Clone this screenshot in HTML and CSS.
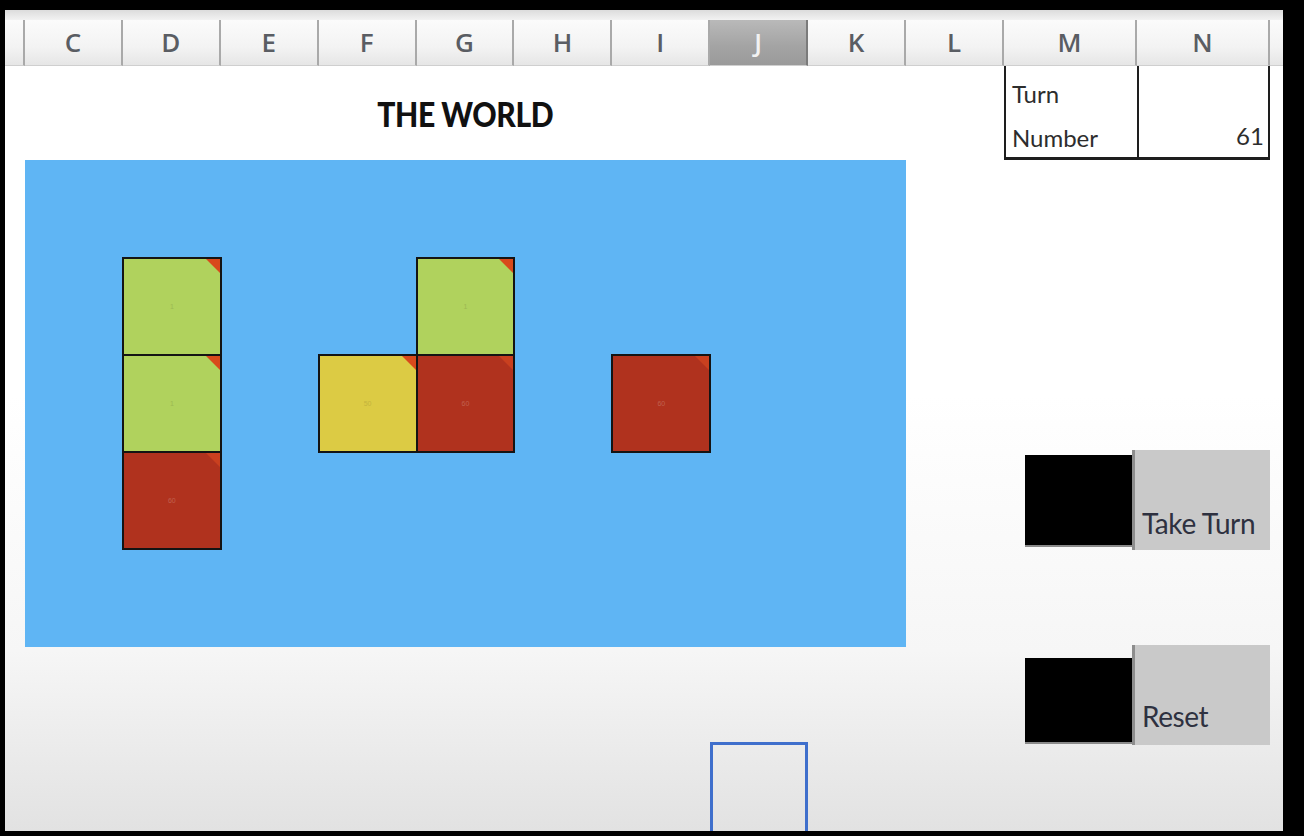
FILE: index.html
```html
<!DOCTYPE html>
<html lang="en">
<head>
<meta charset="utf-8">
<title>The World</title>
<link rel="stylesheet" href="styles.css">
</head>
<body>
<div class="screen">
  <div class="sheet">
    <div class="top-strip"></div>
    <div class="col-head">&nbsp;</div>
    <div class="col-head">C</div>
    <div class="col-head">D</div>
    <div class="col-head">E</div>
    <div class="col-head">F</div>
    <div class="col-head">G</div>
    <div class="col-head">H</div>
    <div class="col-head">I</div>
    <div class="col-head col-head--active">J</div>
    <div class="col-head">K</div>
    <div class="col-head">L</div>
    <div class="col-head">M</div>
    <div class="col-head">N</div>
    <div class="col-head col-head--rest">&nbsp;</div>

    <div class="title-cell"><h1 class="title">THE WORLD</h1></div>

    <div class="turn-box">
      <div class="turn-label">Turn<br>Number</div>
      <div class="turn-value">61</div>
    </div>

    <div class="world">
      <div class="tile tile--green c2 r2"><span>1</span></div>
      <div class="tile tile--green c2 r3"><span>1</span></div>
      <div class="tile tile--red c2 r4"><span>60</span></div>
      <div class="tile tile--yellow c4 r3"><span>50</span></div>
      <div class="tile tile--green c5 r2"><span>1</span></div>
      <div class="tile tile--red c5 r3"><span>60</span></div>
      <div class="tile tile--red c7 r3"><span>60</span></div>
    </div>

    <div class="controls">
      <div class="btn">
        <div class="btn-black"></div>
        <div class="btn-face">Take Turn</div>
      </div>
      <div class="btn btn--reset">
        <div class="btn-black"></div>
        <div class="btn-face">Reset</div>
      </div>
    </div>

    <div class="selected-cell"></div>
  </div>
</div>
</body>
</html>
```
FILE: styles.css
```css
html, body {
  margin: 0;
  padding: 0;
  background: #000;
}

.screen {
  width: 1304px;
  height: 836px;
  box-sizing: border-box;
  padding: 10px 21px 5px 5px;
  display: flex;
  background: #000;
}

.sheet {
  flex: 1;
  display: grid;
  grid-template-columns: 20px repeat(10, 97.9px) 133px 133px 1fr;
  grid-template-rows: 10px 46px 94px 98px 97px 97px 97px 98px 97px 1fr;
  background: linear-gradient(to bottom, #ffffff 0%, #ffffff 47%, #f6f6f6 78%, #e2e2e2 100%);
  overflow: hidden;
  font-family: Lato, "Open Sans", "Liberation Sans", sans-serif;
}

.top-strip {
  grid-column: 1 / -1;
  grid-row: 1;
  background: linear-gradient(to bottom, #dcdcdc, #f2f2f2);
}

.col-head {
  grid-row: 2;
  display: flex;
  align-items: center;
  justify-content: center;
  background: linear-gradient(to bottom, #fbfbfb 0%, #f3f3f3 60%, #e6e6e6 100%);
  border-right: 2px solid #a9a9a9;
  border-bottom: 1px solid #cfcfcf;
  box-sizing: border-box;
  font-family: "Open Sans", Lato, sans-serif;
  font-weight: 600;
  font-size: 26px;
  color: #5a5d63;
  padding-bottom: 2px;
}

.col-head--active {
  background: linear-gradient(to bottom, #b9b9b9 0%, #a3a3a3 60%, #9a9a9a 100%);
  color: #f2f2f2;
  border-right-color: #7b7b7b;
}

.col-head--rest {
  border-right: none;
}

.title-cell {
  grid-column: 2 / 11;
  grid-row: 3;
  display: flex;
  align-items: center;
  justify-content: center;
}

.title {
  margin: 0;
  font-family: Lato, sans-serif;
  font-weight: 900;
  font-size: 35px;
  color: #111;
  letter-spacing: -0.5px;
  transform: scaleX(0.86);
}

.turn-box {
  grid-column: 12 / 14;
  grid-row: 3;
  display: grid;
  grid-template-columns: 133px 1fr;
  border-left: 2px solid #1e1e1e;
  border-right: 2px solid #1e1e1e;
  border-bottom: 3px solid #1e1e1e;
  box-sizing: border-box;
  font-size: 24px;
  color: #2d2d2d;
}

.turn-label {
  line-height: 44px;
  padding: 6px 0 0 6px;
  border-right: 2px solid #1e1e1e;
}

.turn-value {
  display: flex;
  align-items: flex-end;
  justify-content: flex-end;
  padding: 0 4px 4px 0;
  line-height: 40px;
}

.world {
  grid-column: 2 / 11;
  grid-row: 4 / 9;
  background: #5fb5f4;
  display: grid;
  grid-template-columns: repeat(9, 1fr);
  grid-template-rows: 98px 97px 97px 97px 98px;
}

.c2 { grid-column: 2; }
.c4 { grid-column: 4; }
.c5 { grid-column: 5; }
.c7 { grid-column: 7; }
.r2 { grid-row: 2; }
.r3 { grid-row: 3; }
.r4 { grid-row: 4; }

.tile {
  position: relative;
  border: 2px solid #141414;
  box-sizing: border-box;
  margin: -1px;
  display: flex;
  align-items: center;
  justify-content: center;
  overflow: hidden;
}

.tile::after {
  content: "";
  position: absolute;
  top: 0;
  right: 0;
  width: 0;
  height: 0;
  border-top: 14px solid #d8491c;
  border-left: 14px solid transparent;
}

.tile span {
  font-size: 7px;
  font-family: "Liberation Sans", sans-serif;
}

.tile--green { background: #b0d25d; }
.tile--green span { color: #9cb852; }

.tile--red { background: #b0321e; }
.tile--red::after { border-top-color: #c9401f; }
.tile--red span { color: #c0604e; }

.tile--yellow { background: #dccb44; }
.tile--yellow span { color: #c4b43d; }

.controls {
  grid-column: 12 / 14;
  grid-row: 4 / 11;
  display: flex;
  flex-direction: column;
  gap: 95px;
  padding: 290px 0 0 21px;
}

.btn {
  display: flex;
  align-items: center;
}

.btn-black {
  width: 107px;
  height: 90px;
  background: #000;
  box-shadow: 0 2px 0 #8a8a8a;
}

.btn-face {
  width: 138px;
  height: 100px;
  box-sizing: border-box;
  background: #c9c9c9;
  border-left: 3px solid #8d8d8d;
  display: flex;
  align-items: flex-end;
  padding: 0 0 10px 7px;
  font-size: 28px;
  color: #2e3140;
  letter-spacing: -0.4px;
}

.btn--reset {
  align-items: flex-end;
}

.btn--reset .btn-black {
  height: 84px;
  margin-bottom: 3px;
}

.btn--reset .btn-face {
  padding-bottom: 12px;
}

.selected-cell {
  grid-column: 9;
  grid-row: 10;
  margin-top: -2px;
  border: 3px solid #3f6fcc;
  border-bottom: none;
}
```
